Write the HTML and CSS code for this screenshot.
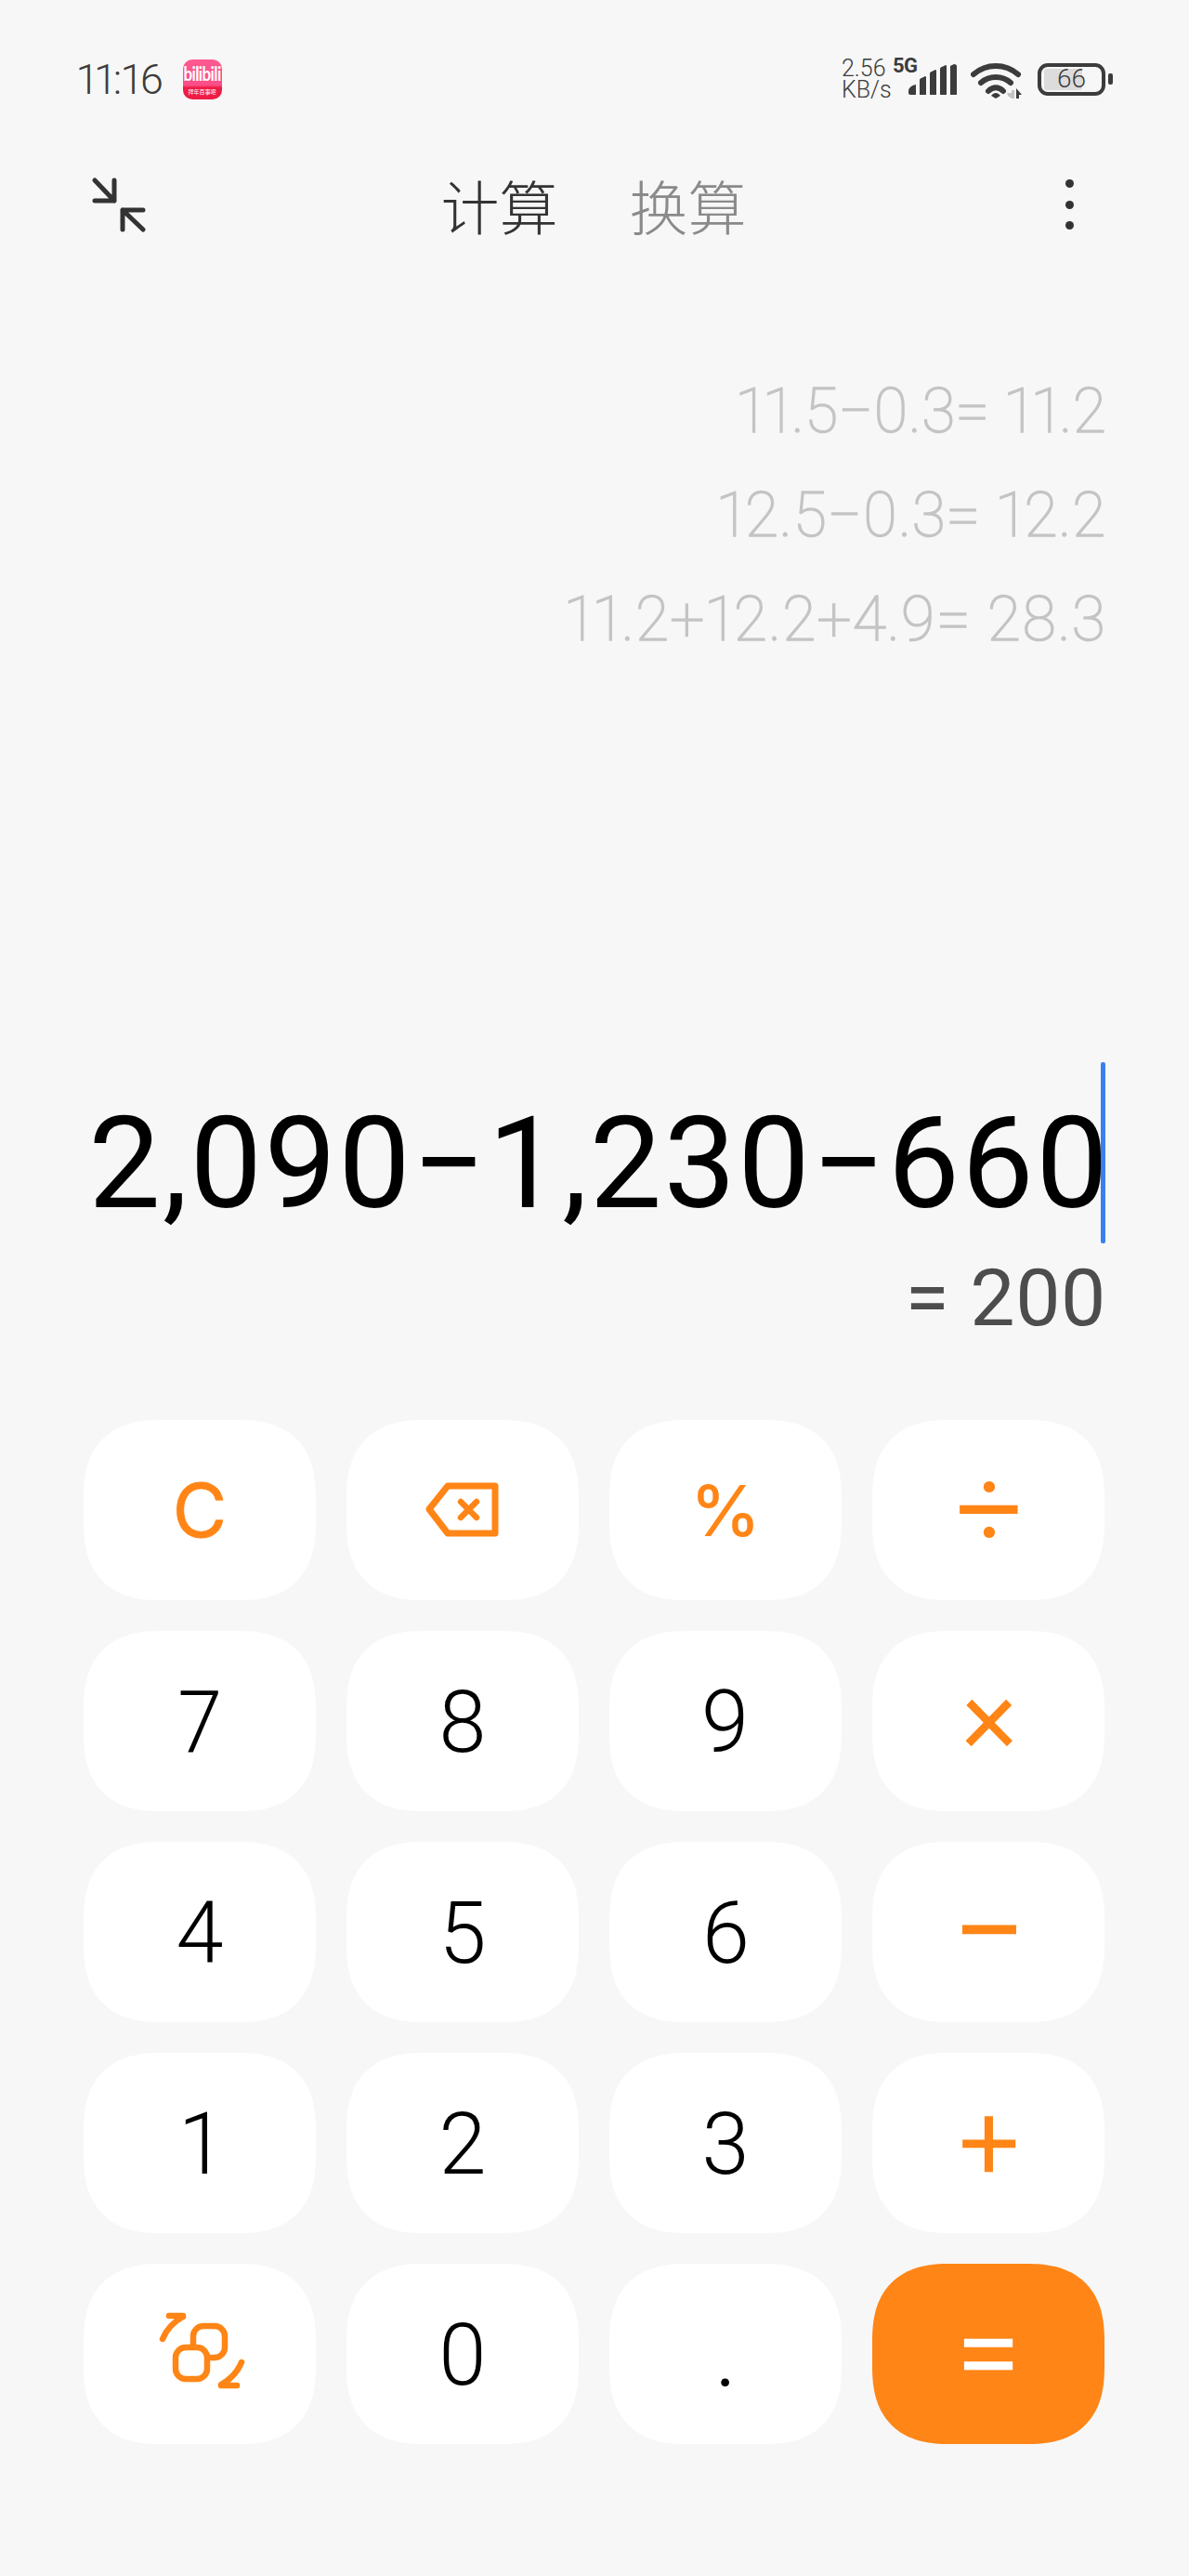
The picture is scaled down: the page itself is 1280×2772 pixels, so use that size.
FILE: index.html
```html
<!DOCTYPE html>
<html lang="zh">
<head>
<meta charset="utf-8">
<title>计算器</title>
<link rel="stylesheet" href="styles.css">
</head>
<body>
<main class="app">
  <header class="status">
    <div class="status-left">
      <span class="time">11:16</span>
      <span class="bili"><span class="bili-name">bilibili</span><span class="bili-sub">拜年百事吧</span></span>
    </div>
    <div class="status-right">
      <span class="speed">2.56<br>KB/s</span>
      <span class="net">5G</span>
      <svg class="signal" width="52" height="34" viewBox="0 0 52 34"><path fill="#3c3c3c" d="M0 29c0-3 3-6 8-7v11H2c-1 0-2-1-2-2zM12 17c0-1 1-2 2-2l4-2c1 0 1 1 1 2v18h-7zM23 10c0-1 1-2 2-2l4-2c1 0 1 1 1 2v25h-7zM34 5c0-1 1-2 2-2l4-2c1 0 1 1 1 2v30h-7zM45 2l4-2c2 0 3 1 3 2v31h-7z"/></svg>
      <svg class="wifi" width="56" height="40" viewBox="0 0 56 40"><g fill="none" stroke="#3c3c3c" stroke-width="6" stroke-linecap="round"><path d="M3 13C17 1 37 1 51 13"/><path d="M11 22C20 14 34 14 43 22"/><path d="M19 31C24 26 30 26 35 31"/></g><path fill="#3c3c3c" d="M22 36c3-4 7-4 10 0l-5 3z"/><path fill="#c4c4c4" d="M44 30h3v9h-3l-4-3-1-3h5z"/><path fill="#3c3c3c" d="M49 28l6 7-3 0v4h-3z"/></svg>
      <span class="battery"><span class="battery-fill"></span><span class="battery-num">66</span></span>
      <span class="battery-nub"></span>
    </div>
  </header>

  <nav class="toolbar">
    <svg class="compress" width="60" height="60" viewBox="0 0 60 60"><g fill="none" stroke="#333" stroke-width="5" stroke-linecap="round" stroke-linejoin="round"><path d="M3 4L24 26M24 4V26H3"/><path d="M33 36H55M33 36V57M33 36L55 57"/></g></svg>
    <div class="tabs"><span class="tab tab-on">计算</span><span class="tab">换算</span></div>
    <span class="more"><i></i><i></i><i></i></span>
  </nav>

  <section class="history">
    <div>11.5−0.3= 11.2</div>
    <div>12.5−0.3= 12.2</div>
    <div>11.2+12.2+4.9= 28.3</div>
  </section>

  <section class="display">
    <div class="expr-row"><span class="expr">2,090−1,230−660</span><span class="caret"></span></div>
    <div class="result">= 200</div>
  </section>

  <section class="keys">
    <button class="key op op-c">C</button>
    <button class="key op"><svg width="80" height="60" viewBox="0 0 80 60"><g fill="none" stroke="#ff8516" stroke-linecap="round" stroke-linejoin="round"><path stroke-width="7" d="M4 29L24 4H75V55H24Z"/><path stroke-width="6.5" d="M38 21L55 38M55 21L38 38"/></g></svg></button>
    <button class="key op op-pct">%</button>
    <button class="key op op-div">÷</button>

    <button class="key">7</button>
    <button class="key">8</button>
    <button class="key">9</button>
    <button class="key op op-mul">×</button>

    <button class="key">4</button>
    <button class="key">5</button>
    <button class="key">6</button>
    <button class="key op op-min">−</button>

    <button class="key">1</button>
    <button class="key">2</button>
    <button class="key">3</button>
    <button class="key op op-add">+</button>

    <button class="key op"><svg width="100" height="90" viewBox="0 0 100 90"><g fill="none" stroke="#ff8516" stroke-linecap="round" stroke-linejoin="round" stroke-width="6.5"><rect x="43" y="15" width="34" height="34" rx="11"/><rect x="24" y="38" width="34" height="34" rx="11" fill="#fff"/><path d="M10 29C14 19 21 11 32 5M17 4H32"/><path d="M95 54C91 64 84 72 73 78M73 79H90"/></g></svg></button>
    <button class="key">0</button>
    <button class="key key-dot">.</button>
    <button class="key key-eq">=</button>
  </section>
</main>
</body>
</html>
```
FILE: styles.css
```css
* { box-sizing: border-box; }
html, body { margin: 0; padding: 0; }
body { background: #f7f7f7; font-family: Roboto, "Noto Sans CJK SC", sans-serif; }
.app { width: 1280px; height: 2772px; display: flex; flex-direction: column; overflow: hidden; }

.status { height: 170px; display: flex; justify-content: space-between; align-items: center; padding: 0 82px 0 83px; color: #3c3c3c; }
.status-left { display: flex; align-items: center; gap: 21px; }
.time { font-size: 45px; font-weight: 300; letter-spacing: -0.3px; font-variant-numeric: proportional-nums; }
.bili { width: 42px; height: 43px; border-radius: 10px; background: linear-gradient(#ff5a92 0%, #fb4d87 65%, #ee1c46 70%, #ee1c46 100%); display: flex; flex-direction: column; align-items: center; color: #fff; overflow: hidden; font-family: Lato, sans-serif; }
.bili-name { font-size: 17px; line-height: 24px; margin-top: 3px; font-weight: 700; letter-spacing: -0.6px; transform: scaleY(1.25); }
.bili-sub { font-family: "Noto Sans CJK SC", sans-serif; font-size: 6px; line-height: 10px; margin-top: 3px; white-space: nowrap; }
.status-right { display: flex; align-items: center; }
.speed { font-size: 25px; font-weight: 300; line-height: 23px; width: 55px; }
.net { font-size: 22px; font-weight: 700; align-self: flex-start; margin-top: -4px; width: 17px; letter-spacing: -0.5px; white-space: nowrap; }
.signal { margin-top: 1px; }
.wifi { margin-left: 15px; margin-top: 4px; }
.battery { width: 73px; height: 35px; margin-left: 16px; border: 4px solid #3c3c3c; border-radius: 11px; display: flex; align-items: center; justify-content: center; position: relative; }
.battery-fill { position: absolute; left: 3px; top: 2px; bottom: 2px; width: 41px; background: #dcdcdc; border-radius: 3px; }
.battery-num { position: relative; font-size: 28px; font-weight: 300; line-height: 1; }
.battery-nub { width: 5px; height: 12px; margin-left: 3px; background: #3c3c3c; border-radius: 2px; }

.toolbar { height: 100px; display: flex; align-items: center; justify-content: space-between; padding: 0 124px 0 99px; }
.compress { display: block; }
.tabs { display: flex; gap: 77px; margin-right: 28px; }
.tab { font-family: "Noto Sans CJK SC", sans-serif; font-size: 63px; font-weight: 300; line-height: 80px; color: #8a8a8a; }
.tab-on { color: #333; }
.more { display: flex; flex-direction: column; gap: 13.5px; }
.more i { display: block; width: 9px; height: 9px; border-radius: 50%; background: #333; }

.history { padding: 116.5px 89px 0 0; text-align: right; color: #c4c4c4; font-size: 66px; font-weight: 100; -webkit-text-stroke: 1.5px #c4c4c4; line-height: 112px; font-variant-numeric: proportional-nums; letter-spacing: 0.7px; }
.history div:first-child { letter-spacing: 0.2px; }
.history div:last-child { letter-spacing: 1.1px; }

.display { margin-top: auto; color: #000; }
.expr-row { display: flex; justify-content: flex-end; height: 195px; padding-right: 90px; }
.expr { font-size: 138px; font-weight: 400; line-height: 171px; padding-top: 24px; margin-right: -10px; white-space: nowrap; letter-spacing: 2.3px; }
.caret { width: 5px; height: 195px; background: #3a7ff0; border-radius: 2px; }
.result { margin-top: 9px; padding-right: 89px; text-align: right; font-size: 86px; font-weight: 400; line-height: 100px; color: #4d4d4d; letter-spacing: 0.6px; }

.keys { margin-top: 81px; margin-bottom: 142px; padding: 0 90px; display: grid; grid-template-columns: repeat(4, 250px); grid-auto-rows: 194px; column-gap: 33px; row-gap: 33px; }
.key { border: 0; padding: 4px 0 0; margin: 0; background: #fff; border-radius: 84px; corner-shape: superellipse(1.3); font-family: Roboto, sans-serif; font-size: 92px; font-weight: 300; color: #000; font-variant-numeric: proportional-nums; display: flex; align-items: center; justify-content: center; line-height: 1; }
.op { color: #ff8516; padding: 0; }
.op-c { font-family: Inter, sans-serif; font-size: 80px; font-weight: 400; -webkit-text-stroke: 0.8px #ff8516; }
.op-pct { font-family: Inter, sans-serif; font-size: 76px; font-weight: 500; }
.op-div { font-size: 124px; -webkit-text-stroke: 2px #ff8516; padding-left: 2px; }
.op-mul { font-size: 110px; -webkit-text-stroke: 2.5px #ff8516; padding: 0 0 12px 2px; }
.op-min { font-size: 135px; -webkit-text-stroke: 3px #ff8516; padding-left: 2px; }
.op-add { font-size: 112px; -webkit-text-stroke: 2.5px #ff8516; padding-left: 2px; }
.key-dot { font-size: 78px; padding-top: 18px; font-weight: 400; }
.key-eq { background: #ff8516; color: #fff; font-size: 122px; -webkit-text-stroke: 2.5px #fff; padding: 0; }
```
